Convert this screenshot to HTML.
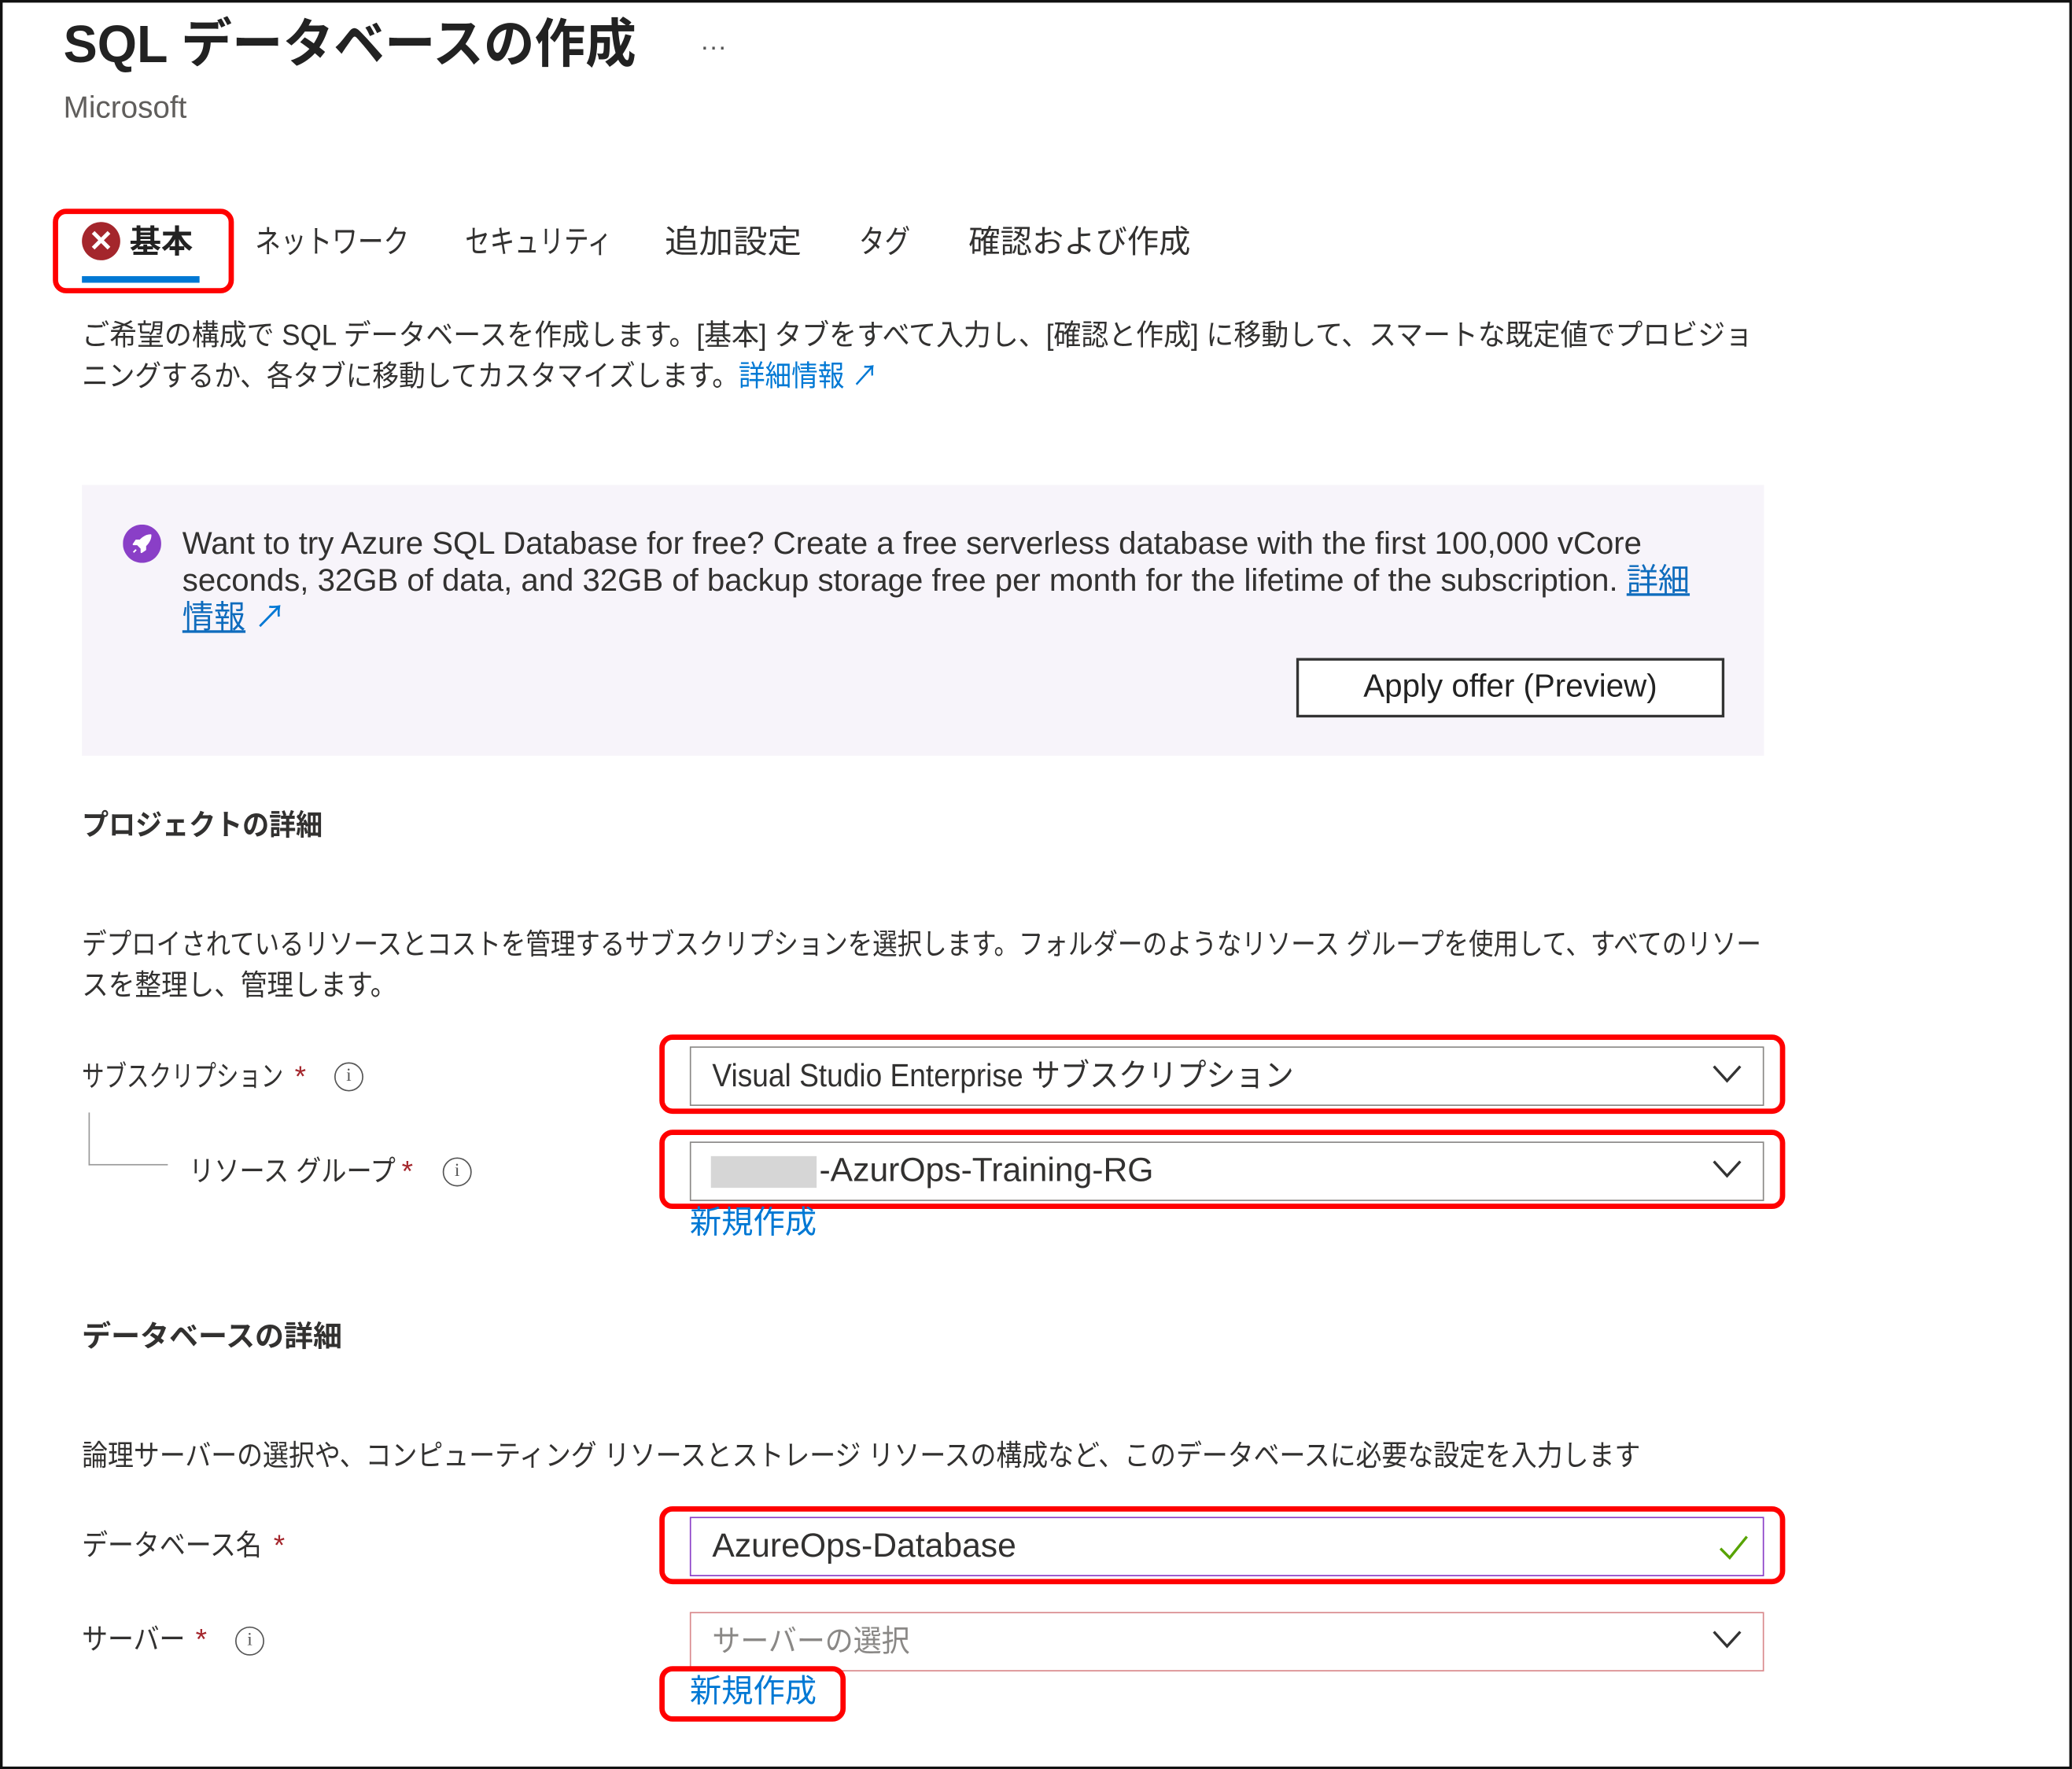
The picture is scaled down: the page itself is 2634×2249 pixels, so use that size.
<!DOCTYPE html>
<html><head><meta charset="utf-8"><style>
html,body{margin:0;padding:0;background:#fff;}
body{width:2634px;height:2249px;overflow:hidden;position:relative;}
#w{position:absolute;left:0;top:0;width:1568px;height:1339px;transform:scale(1.6798);transform-origin:0 0;font-family:"Liberation Sans","Noto Sans CJK JP",sans-serif;color:#323130;}
.a{position:absolute;white-space:nowrap;line-height:1;transform-origin:0 0;}
.frame{position:absolute;left:0;top:0;width:1564px;height:1335px;border:2px solid #111;}
.red{position:absolute;border:4px solid #f00;border-radius:10px;box-sizing:border-box;}
.dd{position:absolute;left:522px;width:813px;height:45px;border:1px solid #8a8886;box-sizing:border-box;background:#fff;}
.chev{position:absolute;right:16px;top:13px;width:22px;height:14px;}
.lnk{color:#0078d4;}
.star{position:absolute;color:#a4262c;font-size:22px;line-height:1;}
.info{position:absolute;width:20px;height:20px;border:1.3px solid #555;border-radius:50%;font-size:14px;line-height:20px;text-align:center;color:#555;font-family:"Liberation Serif",serif;}
.t{font-size:22px;}
</style></head><body><div id="w">
<div class="frame"></div>
<div class="a" style="left:48px;top:14px;font-size:40px;font-weight:bold;color:#222;transform:scaleX(0.962);">SQL データベースの作成</div>
<div class="a" style="left:530px;top:26px;font-size:20px;color:#555;">···</div>
<div class="a" style="left:48px;top:70px;font-size:23px;color:#605e5c;">Microsoft</div>

<div class="red" style="left:40px;top:158px;width:137px;height:64px;"></div>
<div class="a" style="left:62px;top:168px;width:29px;height:29px;border-radius:50%;background:#a4262c;color:#fff;font-size:22px;text-align:center;line-height:29px;font-weight:bold;">✕</div>
<div class="a" style="left:98px;top:172px;font-size:24px;font-weight:bold;color:#222;">基本</div>
<div class="a" style="left:62px;top:209px;width:89px;height:5px;background:#0078d4;"></div>
<div class="a" style="left:193px;top:172px;font-size:24px;transform:scaleX(0.81);">ネットワーク</div>
<div class="a" style="left:352px;top:172px;font-size:24px;transform:scaleX(0.78);">セキュリティ</div>
<div class="a" style="left:503px;top:172px;font-size:24px;transform:scaleX(1.08);">追加設定</div>
<div class="a" style="left:650px;top:172px;font-size:24px;transform:scaleX(0.81);">タグ</div>
<div class="a" style="left:733px;top:172px;font-size:24px;">確認および作成</div>

<div class="a t" style="left:62px;top:243px;transform:scaleX(0.945);">ご希望の構成で SQL データベースを作成します。[基本] タブをすべて入力し、[確認と作成] に移動して、スマートな既定値でプロビジョ</div>
<div class="a t" style="left:62px;top:274px;transform:scaleX(0.91);">ニングするか、各タブに移動してカスタマイズします。<span class="lnk">詳細情報 ↗</span></div>

<div class="a" style="left:62px;top:367px;width:1273px;height:205px;background:#f7f4fa;"></div>
<svg class="a" style="left:93px;top:397px;width:29px;height:29px;" viewBox="0 0 29 29"><circle cx="14.5" cy="14.5" r="14.5" fill="#8a3fc7"/><path d="M21 8 C17 8 13 11 11 15 L14 18 C18 16 21 12 21 8 Z M11 15 L8 15 L10 12 L13 12 M14 18 L14 21 L17 19 L17 16 M10 19 L8 21" fill="#fff" stroke="#fff" stroke-width="1.2" stroke-linejoin="round"/></svg>
<div class="a" style="left:138px;top:398px;font-size:23.9px;line-height:28px;white-space:normal;width:1172px;">Want to try Azure SQL Database for free? Create a free serverless database with the first 100,000 vCore seconds, 32GB of data, and 32GB of backup storage free per month for the lifetime of the subscription. <span style="color:#0f6cbd;text-decoration:underline;">詳細<br>情報</span> <span class="lnk">↗</span></div>
<div class="a" style="left:981px;top:498px;width:324px;height:45px;border:2px solid #333;box-sizing:border-box;background:#fff;font-size:24px;text-align:center;line-height:40px;color:#222;">Apply offer (Preview)</div>

<div class="a" style="left:62px;top:614px;font-size:22px;font-weight:bold;transform:scaleX(0.92);">プロジェクトの詳細</div>
<div class="a t" style="left:62px;top:704px;transform:scaleX(0.852);">デプロイされているリソースとコストを管理するサブスクリプションを選択します。フォルダーのようなリソース グループを使用して、すべてのリソー</div>
<div class="a t" style="left:62px;top:735px;transform:scaleX(0.91);">スを整理し、管理します。</div>

<div class="a t" style="left:62px;top:804px;transform:scaleX(0.77);">サブスクリプション</div>
<div class="star" style="left:223px;top:804px;">*</div>
<div class="info" style="left:253px;top:804px;">i</div>
<div class="red" style="left:499px;top:783px;width:852px;height:60px;"></div>
<div class="dd" style="top:792px;"><div class="a" style="left:16px;top:10px;font-size:24px;transform:scaleX(0.92);">Visual Studio Enterprise サブスクリプション</div><svg class="chev" viewBox="0 0 22 14"><path d="M1 1 L11 12 L21 1" fill="none" stroke="#333" stroke-width="2"/></svg></div>

<div class="a" style="left:67px;top:842px;width:1px;height:40px;background:#999;"></div>
<div class="a" style="left:67px;top:881px;width:60px;height:1px;background:#999;"></div>
<div class="a t" style="left:143px;top:876px;transform:scaleX(0.87);">リソース グループ</div>
<div class="star" style="left:304px;top:876px;">*</div>
<div class="info" style="left:335px;top:876px;">i</div>
<div class="red" style="left:499px;top:855px;width:852px;height:60px;"></div>
<div class="dd" style="top:864px;"><div class="a" style="left:15px;top:10px;width:80px;height:24px;background:#d6d6d6;"></div><div class="a" style="left:97px;top:9px;font-size:25.4px;">-AzurOps-Training-RG</div><svg class="chev" viewBox="0 0 22 14"><path d="M1 1 L11 12 L21 1" fill="none" stroke="#333" stroke-width="2"/></svg></div>
<div class="a lnk" style="left:522px;top:914px;font-size:24px;">新規作成</div>

<div class="a" style="left:62px;top:1001px;font-size:22px;font-weight:bold;">データベースの詳細</div>
<div class="a t" style="left:62px;top:1091px;transform:scaleX(0.89);">論理サーバーの選択や、コンピューティング リソースとストレージ リソースの構成など、このデータベースに必要な設定を入力します</div>

<div class="a t" style="left:62px;top:1159px;transform:scaleX(0.89);">データベース名</div>
<div class="star" style="left:207px;top:1159px;">*</div>
<div class="red" style="left:499px;top:1140px;width:852px;height:59px;"></div>
<div class="dd" style="top:1148px;border:1.5px solid #8a3fc7;"><div class="a" style="left:16px;top:9px;font-size:25.4px;">AzureOps-Database</div><svg class="a" style="right:10px;top:12px;width:24px;height:20px;" viewBox="0 0 24 20"><path d="M2 11 L9 18 L22 2" fill="none" stroke="#57a300" stroke-width="2"/></svg></div>

<div class="a t" style="left:62px;top:1230px;transform:scaleX(0.89);">サーバー</div>
<div class="star" style="left:148px;top:1230px;">*</div>
<div class="info" style="left:178px;top:1231px;">i</div>
<div class="dd" style="top:1220px;border-color:#d9898c;"><div class="a" style="left:16px;top:10px;font-size:23px;color:#8a8886;transform:scaleX(0.93);">サーバーの選択</div><svg class="chev" viewBox="0 0 22 14"><path d="M1 1 L11 12 L21 1" fill="none" stroke="#333" stroke-width="2"/></svg></div>
<div class="red" style="left:499px;top:1261px;width:141px;height:42px;background:#fff;"></div>
<div class="a lnk" style="left:522px;top:1269px;font-size:24px;">新規作成</div>
</div></body></html>
